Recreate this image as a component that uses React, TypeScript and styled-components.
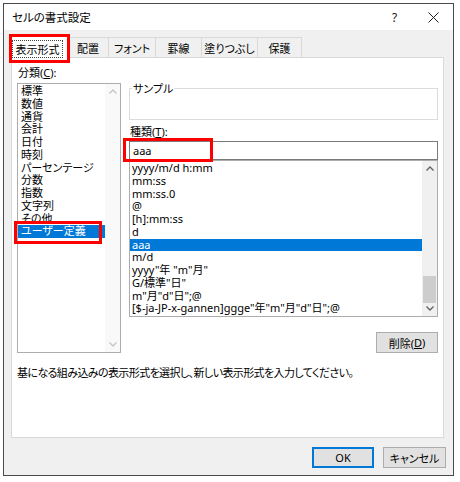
import React from 'react'
import styled, { createGlobalStyle } from 'styled-components'

const GlobalStyle = createGlobalStyle`
  html, body {
    margin: 0;
    padding: 0;
    background: #ffffff;
  }
  body {
    font-family: "Noto Sans", "Noto Sans CJK JP", sans-serif;
    font-size: 11px;
    color: #000000;
    font-feature-settings: "palt";
  }
  * {
    box-sizing: border-box;
  }
`

const categories = ['標準', '数値', '通貨', '会計', '日付', '時刻', 'パーセンテージ', '分数', '指数', '文字列', 'その他', 'ユーザー定義']

const formats = [
  'yyyy/m/d h:mm',
  'mm:ss',
  'mm:ss.0',
  '@',
  '[h]:mm:ss',
  'd',
  'aaa',
  'm/d',
  'yyyy"年 "m"月"',
  'G/標準"日"',
  'm"月"d"日";@',
  '[$-ja-JP-x-gannen]ggge"年"m"月"d"日";@',
]

const tabs = [
  { label: '表示形式', width: 57 },
  { label: '配置', width: 42 },
  { label: 'フォント', width: 48 },
  { label: '罫線', width: 47 },
  { label: '塗りつぶし', width: 57 },
  { label: '保護', width: 45 },
]

function Chevron({ up, color }: { up?: boolean; color: string }) {
  return (
    <svg width="8" height="5" viewBox="0 0 8 5">
      <polyline
        points={up ? '0.5,4.5 4,1 7.5,4.5' : '0.5,0.5 4,4 7.5,0.5'}
        fill="none"
        stroke={color}
        strokeWidth="1.3"
      />
    </svg>
  )
}

function ScrollBar({ dim, thumbTop, thumbHeight }: { dim?: boolean; thumbTop?: number; thumbHeight?: number }) {
  const arrow = dim ? '#c4c4c4' : '#606060'
  return (
    <Track $dim={dim}>
      <ArrowBox>
        <Chevron up color={arrow} />
      </ArrowBox>
      <ThumbArea>
        {thumbHeight ? <Thumb style={{ top: thumbTop, height: thumbHeight }} /> : null}
      </ThumbArea>
      <ArrowBox>
        <Chevron color={arrow} />
      </ArrowBox>
    </Track>
  )
}

export default function App() {
  return (
    <>
      <GlobalStyle />
      <Screen>
        <Dialog>
          <TitleBar>
            <Title>セルの書式設定</Title>
            <TitleButtons>
              <TitleButton>?</TitleButton>
              <TitleButton>
                <svg width="11" height="11" viewBox="0 0 11 11">
                  <path d="M0.5 0.5 L10.5 10.5 M10.5 0.5 L0.5 10.5" stroke="#1a1a1a" strokeWidth="1" />
                </svg>
              </TitleButton>
            </TitleButtons>
          </TitleBar>

          <Body>
            <TabRow>
              {tabs.map((t, i) => (
                <Tab key={t.label} $active={i === 0} $width={t.width}>
                  {i === 0 ? <FocusLabel>{t.label}</FocusLabel> : t.label}
                  {i === 0 && <RedFrame $left={-3} $top={-1} $w={61} $h={29} />}
                </Tab>
              ))}
            </TabRow>

            <Panel>
              <Columns>
                <LeftColumn>
                  <FieldLabel>
                    分類(<u>C</u>):
                  </FieldLabel>
                  <CategoryList>
                    <ListItems>
                      {categories.map((c, i) => (
                        <Row key={c} $selected={i === categories.length - 1}>
                          {c}
                          {i === categories.length - 1 && <RedFrame $left={-4} $top={-4} $w={88} $h={23} />}
                        </Row>
                      ))}
                    </ListItems>
                    <ScrollBar dim />
                  </CategoryList>
                </LeftColumn>

                <RightColumn>
                  <SampleBox>
                    <SampleLegend>サンプル</SampleLegend>
                    <SampleBody />
                  </SampleBox>
                  <FieldLabel $gap>
                    種類(<u>T</u>):
                  </FieldLabel>
                  <InputWrap>
                    <TypeInput>aaa</TypeInput>
                    <RedFrame $left={-6} $top={-3} $w={90} $h={24} />
                  </InputWrap>
                  <FormatList>
                    <ListItems>
                      {formats.map((f) => (
                        <Row key={f} $selected={f === 'aaa'} $pad={2}>
                          {f}
                        </Row>
                      ))}
                    </ListItems>
                    <ScrollBar thumbTop={100} thumbHeight={27} />
                  </FormatList>
                  <DeleteRow>
                    <Button $width={62}>
                      削除(<u>D</u>)
                    </Button>
                  </DeleteRow>
                </RightColumn>
              </Columns>
              <Description>基になる組み込みの表示形式を選択し、新しい表示形式を入力してください。</Description>
            </Panel>

            <Footer>
              <Button $width={62} $primary>
                OK
              </Button>
              <Button $width={63}>キャンセル</Button>
            </Footer>
          </Body>
        </Dialog>
      </Screen>
    </>
  )
}

const Screen = styled.div`
  width: 460px;
  height: 482px;
  padding: 3px 0 0 3px;
  overflow: hidden;
  background: #ffffff;
`

const Dialog = styled.div`
  width: 451px;
  height: 473px;
  border: 1px solid #4a4a4a;
  display: flex;
  flex-direction: column;
  background: #f0f0f0;
`

const TitleBar = styled.div`
  height: 26px;
  display: flex;
  align-items: center;
  justify-content: space-between;
  padding-left: 8px;
  background: #ffffff;
`

const Title = styled.div`
  font-size: 11.5px;
  color: #000000;
`

const TitleButtons = styled.div`
  display: flex;
  height: 100%;
`

const TitleButton = styled.div`
  width: 39px;
  height: 100%;
  display: flex;
  align-items: center;
  justify-content: center;
  font-size: 12px;
  color: #1a1a1a;
`

const Body = styled.div`
  flex: 1;
  display: flex;
  flex-direction: column;
  padding: 4px 9px 6px 7px;
`

const TabRow = styled.div`
  height: 23px;
  display: flex;
  align-items: flex-end;
  position: relative;
  z-index: 2;
`

const Tab = styled.div<{ $active?: boolean; $width: number }>`
  position: relative;
  width: ${({ $width }) => $width}px;
  height: ${({ $active }) => ($active ? 24 : 20)}px;
  margin-bottom: ${({ $active }) => ($active ? -1 : 0)}px;
  margin-left: ${({ $active }) => ($active ? 0 : -1)}px;
  display: flex;
  align-items: center;
  justify-content: center;
  border: 1px solid #d9d9d9;
  border-bottom: none;
  background: ${({ $active }) => ($active ? '#ffffff' : '#f0f0f0')};
  font-size: 11px;
  white-space: nowrap;
`

const FocusLabel = styled.span`
  display: flex;
  align-items: center;
  justify-content: center;
  width: 51px;
  height: 18px;
  margin: 4px 4px 0 0;
  border: 1px dotted #444444;
`

const RedFrame = styled.div<{ $left: number; $top: number; $w: number; $h: number }>`
  position: absolute;
  left: ${({ $left }) => $left}px;
  top: ${({ $top }) => $top}px;
  width: ${({ $w }) => $w}px;
  height: ${({ $h }) => $h}px;
  border: 3px solid #ff0000;
  pointer-events: none;
  z-index: 3;
`

const Panel = styled.div`
  height: 381px;
  background: #ffffff;
  border: 1px solid #d9d9d9;
  padding: 8px 5px 0 5px;
  display: flex;
  flex-direction: column;
`

const Columns = styled.div`
  display: flex;
  gap: 8px;
`

const LeftColumn = styled.div`
  width: 104px;
  display: flex;
  flex-direction: column;
`

const RightColumn = styled.div`
  flex: 1;
  display: flex;
  flex-direction: column;
  padding-top: 16px;
`

const FieldLabel = styled.div<{ $gap?: boolean }>`
  height: 13px;
  line-height: 13px;
  margin-top: ${({ $gap }) => ($gap ? 5 : 0)}px;
  padding-left: 1px;
  font-size: 11px;
`

const CategoryList = styled.div`
  margin-top: 4px;
  height: 270px;
  border: 1px solid #adadad;
  display: flex;
`

const ListItems = styled.div`
  flex: 1;
  padding-top: 1px;
  display: flex;
  flex-direction: column;
`

const Row = styled.div<{ $selected?: boolean; $pad?: number }>`
  position: relative;
  height: 12.75px;
  line-height: 12.75px;
  padding-left: ${({ $pad }) => $pad ?? 3}px;
  white-space: nowrap;
  font-size: 11px;
  background: ${({ $selected }) => ($selected ? '#0078d7' : 'transparent')};
  color: ${({ $selected }) => ($selected ? '#ffffff' : '#000000')};
`

const Track = styled.div<{ $dim?: boolean }>`
  width: 15px;
  display: flex;
  flex-direction: column;
  background: ${({ $dim }) => ($dim ? '#f9f9f9' : '#f0f0f0')};
`

const ArrowBox = styled.div`
  height: 15px;
  display: flex;
  align-items: center;
  justify-content: center;
`

const ThumbArea = styled.div`
  flex: 1;
  position: relative;
`

const Thumb = styled.div`
  position: absolute;
  left: 1px;
  right: 1px;
  background: #cdcdcd;
`

const SampleBox = styled.fieldset`
  margin: 0;
  padding: 0;
  border: 1px solid #dcdcdc;
`

const SampleLegend = styled.legend`
  margin-left: 2px;
  padding: 0 1px;
  height: 13px;
  line-height: 13px;
  font-size: 11px;
`

const SampleBody = styled.div`
  height: 24px;
`

const InputWrap = styled.div`
  position: relative;
  margin-top: 3px;
`

const TypeInput = styled.div`
  height: 19px;
  border: 1px solid #7a7a7a;
  line-height: 17px;
  padding-left: 3px;
  font-size: 11px;
`

const FormatList = styled.div`
  height: 157px;
  border: 1px solid #adadad;
  display: flex;
`

const DeleteRow = styled.div`
  display: flex;
  justify-content: flex-end;
  margin-top: 15px;
`

const Button = styled.div<{ $width: number; $primary?: boolean }>`
  width: ${({ $width }) => $width}px;
  height: 21px;
  display: flex;
  align-items: center;
  justify-content: center;
  background: #e1e1e1;
  border: 1px solid ${({ $primary }) => ($primary ? '#0078d7' : '#adadad')};
  box-shadow: ${({ $primary }) => ($primary ? 'inset 0 0 0 1px #0078d7' : 'none')};
  font-size: 11px;
`

const Description = styled.div`
  margin-top: 13px;
  height: 13px;
  line-height: 13px;
  font-size: 11px;
  letter-spacing: -0.6px;
  white-space: nowrap;
`

const Footer = styled.div`
  display: flex;
  justify-content: flex-end;
  gap: 9px;
  margin-top: 9px;
  margin-right: -2px;
`
